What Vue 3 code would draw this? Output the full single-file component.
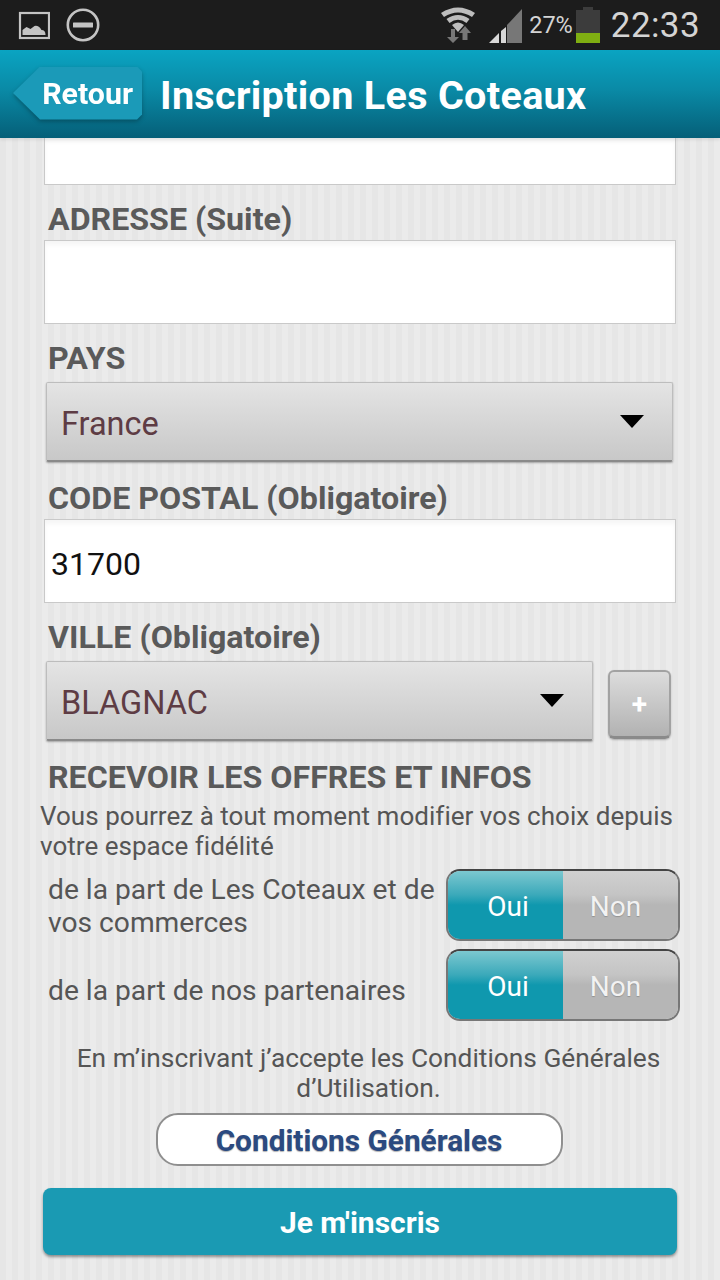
<template>
  <div class="screen">
    <!-- Status bar -->
    <div class="statusBar">
      <div class="statusLeft">
        <svg width="32" height="30" viewBox="0 0 32 30">
          <rect x="2" y="3" width="29" height="25" fill="none" stroke="#c4c4c4" stroke-width="2.2" />
          <path d="M5 25 L5 20 L9 17 L13 19 L17 16 Q21 15 24 20 Q28 20 28 25 Z" fill="#c4c4c4" transform="translate(-0.5 0)" />
        </svg>
        <svg width="36" height="36" viewBox="0 0 36 36">
          <circle cx="18" cy="18" r="15.2" fill="none" stroke="#c4c4c4" stroke-width="2.6" />
          <rect x="8" y="15.6" width="20" height="4.8" rx="0.5" fill="#c4c4c4" />
        </svg>
      </div>
      <div class="statusRight">
        <svg class="wifi" width="38" height="36" viewBox="0 0 38 36">
          <path d="M1 6 Q18 -5 35 6 L32 10 Q18 1 4 10 Z" fill="#bdbdbd" />
          <path d="M6.5 12 Q18 4 29.5 12 L26.5 16 Q18 9.5 9.5 16 Z" fill="#bdbdbd" />
          <path d="M12 18 Q18 13 24 18 L18 25 Z" fill="#bdbdbd" />
          <path d="M11 22 V30 H7 L13 36 L19 30 H15 V22 Z" fill="#777" />
          <path d="M25 19 L19 26 H22.5 V33 H27.5 V26 H31 Z" fill="#777" />
        </svg>
        <svg class="signal" width="35" height="36" viewBox="0 0 35 36">
          <path d="M1 36 L11 26 V36 Z" fill="#d8d8d8" />
          <path d="M13 24 L18 20 V36 H13 Z" fill="#d8d8d8" />
          <path d="M19 18 L34 2 V36 H19 Z" fill="#777" />
        </svg>
        <span class="battText">27%</span>
        <svg class="batt" width="26" height="36" viewBox="0 0 26 36">
          <rect x="8" y="0" width="10" height="3" fill="#3c3c3c" />
          <rect x="1" y="3" width="24" height="33" fill="#3c3c3c" />
          <rect x="1" y="26" width="24" height="10" fill="#7fae12" />
        </svg>
        <span class="clock">22:33</span>
      </div>
    </div>

    <!-- Header -->
    <header class="topBar">
      <div class="backBtn">
        <div class="backShape">Retour</div>
      </div>
      <h1 class="title">Inscription Les Coteaux</h1>
    </header>

    <!-- Form -->
    <main class="form">
      <div class="input cutInput"></div>

      <label class="fieldLabel">ADRESSE (Suite)</label>
      <div class="input"></div>

      <label class="fieldLabel">PAYS</label>
      <div class="select">
        <span>France</span>
        <i class="arrow"></i>
      </div>

      <label class="fieldLabel">CODE POSTAL (Obligatoire)</label>
      <div class="input">31700</div>

      <label class="fieldLabel">VILLE (Obligatoire)</label>
      <div class="villeRow">
        <div class="select">
          <span>BLAGNAC</span>
          <i class="arrow"></i>
        </div>
        <div class="plusBtn">+</div>
      </div>

      <label class="fieldLabel offers">RECEVOIR LES OFFRES ET INFOS</label>
      <p class="hint">Vous pourrez à tout moment modifier vos choix depuis votre espace fidélité</p>

      <div v-for="row in optins" :key="row.text" class="optRow">
        <div class="optText" :class="{ lower: row.lower }">{{ row.text }}</div>
        <div class="toggle">
          <div class="toggleOn">Oui</div>
          <div class="toggleOff">Non</div>
        </div>
      </div>

      <p class="legal">En m’inscrivant j’accepte les Conditions Générales d’Utilisation.</p>
      <div class="condBtn">Conditions Générales</div>
      <div class="submitBtn">Je m'inscris</div>
    </main>
  </div>
</template>

<script setup>
const optins = [
  { text: "de la part de Les Coteaux et de vos commerces" },
  { text: "de la part de nos partenaires", lower: true },
];
</script>

<style>
html, body {
  margin: 0;
  background: #e8e8e8;
}
</style>

<style scoped>
.screen {
  width: 720px;
  height: 1280px;
  overflow: hidden;
  font-family: Roboto, "Liberation Sans", sans-serif;
  background: repeating-linear-gradient(90deg, #e6e6e6 0 6px, #ebebeb 6px 12px);
}

/* Status bar */
.statusBar {
  height: 50px;
  background: #1c1c1c;
  display: flex;
  align-items: center;
  justify-content: space-between;
  padding: 0 20px 0 18px;
  box-sizing: border-box;
}
.statusLeft {
  display: flex;
  align-items: center;
  gap: 15px;
}
.statusRight {
  display: flex;
  align-items: center;
  color: #d4d4d4;
}
.wifi { margin-right: 10px; }
.signal { margin-right: 6px; }
.battText {
  font-size: 23.5px;
  margin-right: 2px;
}
.batt { margin-right: 10px; }
.clock {
  font-size: 35px;
  letter-spacing: 0.4px;
}

/* Header */
.topBar {
  height: 88px;
  background: linear-gradient(180deg, #0aa4c2 0%, #0a8aa6 45%, #055f78 100%);
  display: flex;
  align-items: center;
  box-shadow: 0 2px 3px rgba(0, 0, 0, 0.08);
  position: relative;
  padding-left: 13px;
}
.backBtn {
  margin-top: -2px;
  filter: drop-shadow(0 2px 2px rgba(0, 0, 0, 0.28));
}
.backShape {
  width: 129px;
  height: 53px;
  background: #1b9ab8;
  clip-path: polygon(0 50%, 27px 0, 124px 0, 129px 5px, 129px 48px, 124px 53px, 27px 53px);
  display: flex;
  align-items: center;
  justify-content: flex-end;
  padding-right: 9px;
  box-sizing: border-box;
  color: #fff;
  font-size: 30.3px;
  font-weight: 700;
}
.title {
  margin: 3px 0 0 18px;
  color: #fff;
  font-size: 39.6px;
  font-weight: 700;
  letter-spacing: 0.3px;
  line-height: 44px;
}

/* Form */
.form {
  padding: 0 44px;
  display: flex;
  flex-direction: column;
}
.input {
  height: 84px;
  box-sizing: border-box;
  width: 632px;
  background: #fff;
  border: 1px solid #c9c9c9;
  padding: 6px 0 0 6px;
  display: flex;
  align-items: center;
  font-size: 32px;
  color: #111;
  box-shadow: inset 0 4px 4px rgba(0, 0, 0, 0.04);
}
.cutInput {
  height: 47px;
  border-top: none;
}
.fieldLabel {
  font-size: 32.2px;
  font-weight: 700;
  color: #5a5a5a;
  line-height: 34px;
  margin: 17px 0 4px 4px;
}
.select {
  margin: 3px 0 2px 2px;
  height: 80px;
  width: 627px;
  box-sizing: border-box;
  border: 1px solid #bdbdbd;
  border-bottom: 2px solid #8a8a8a;
  border-radius: 2px;
  background: linear-gradient(180deg, #e4e4e4, #c8c8c8);
  box-shadow: 0 1px 2px rgba(0, 0, 0, 0.3);
  display: flex;
  align-items: center;
  justify-content: space-between;
  padding: 0 28px 0 14px;
  color: #5e3c44;
  font-size: 32.5px;
}
.select span {
  padding-top: 4px;
}
.arrow {
  width: 0;
  height: 0;
  border-left: 12px solid transparent;
  border-right: 12px solid transparent;
  border-top: 13px solid #000;
}
.villeRow {
  display: flex;
  align-items: flex-start;
}
.villeRow .select {
  width: 547px;
}
.plusBtn {
  margin: 12px 0 0 15px;
  width: 63px;
  height: 69px;
  box-sizing: border-box;
  border: 2px solid #a2a2a2;
  border-bottom: 3px solid #8a8a8a;
  border-radius: 6px;
  background: linear-gradient(180deg, #dcdcdc, #b2b2b2);
  box-shadow: 0 1px 2px rgba(0, 0, 0, 0.25);
  color: #fff;
  font-size: 28px;
  font-weight: 700;
  display: flex;
  align-items: center;
  justify-content: center;
}
.offers {
  margin-bottom: 7px;
}
.hint {
  margin: 0 0 8px -4px;
  font-size: 26px;
  line-height: 30px;
  color: #555;
  letter-spacing: 0.03px;
  width: 650px;
}
.optRow {
  display: flex;
  align-items: center;
  width: 636px;
  margin-bottom: 8px;
}
.optText {
  flex: 1;
  padding: 2px 0 0 4px;
  font-size: 28.2px;
  line-height: 33px;
  color: #555;
}
.optText.lower {
  margin-top: 8px;
}
.toggle {
  width: 234px;
  height: 72px;
  flex-shrink: 0;
  display: flex;
  box-sizing: border-box;
  border: 2px solid #777;
  border-top: 2px solid #444;
  border-radius: 14px;
  overflow: hidden;
  font-size: 28px;
  color: #fff;
}
.toggleOn, .toggleOff {
  display: flex;
  align-items: center;
  justify-content: center;
  padding-top: 2px;
  box-sizing: border-box;
}
.toggleOn {
  width: 115px;
  padding-left: 5px;
  background: linear-gradient(180deg, #7cc8d0 0%, #3ba9ba 35%, #0f98ae 50%, #0f98ae 100%);
}
.toggleOff {
  flex: 1;
  padding-right: 10px;
  background: linear-gradient(180deg, #d0d0d0 0%, #c4c4c4 35%, #b6b6b6 50%, #b6b6b6 100%);
  color: #f2f2f2;
  text-shadow: 0 1px 1px rgba(0, 0, 0, 0.2);
}
.legal {
  margin: 6px 0 0 17px;
  padding: 8px 0 0;
  text-align: center;
  font-size: 26.3px;
  line-height: 30px;
  color: #555;
}
.condBtn {
  align-self: center;
  margin: 10px 0 0 -2px;
  width: 407px;
  height: 53px;
  box-sizing: border-box;
  border: 2px solid #8f8f8f;
  border-radius: 22px;
  padding-top: 2px;
  background: #fff;
  color: #2b4a80;
  font-size: 29.8px;
  font-weight: 700;
  display: flex;
  align-items: center;
  justify-content: center;
  text-shadow: 0 1px 1px rgba(0, 0, 0, 0.3);
}
.submitBtn {
  margin: 22px 0 0 -1px;
  width: 634px;
  height: 67px;
  box-sizing: border-box;
  padding-top: 2px;
  border-radius: 8px;
  background: #1a9ab3;
  box-shadow: 0 2px 3px rgba(0, 0, 0, 0.4);
  color: #fff;
  font-size: 30px;
  font-weight: 700;
  display: flex;
  align-items: center;
  justify-content: center;
}
</style>
